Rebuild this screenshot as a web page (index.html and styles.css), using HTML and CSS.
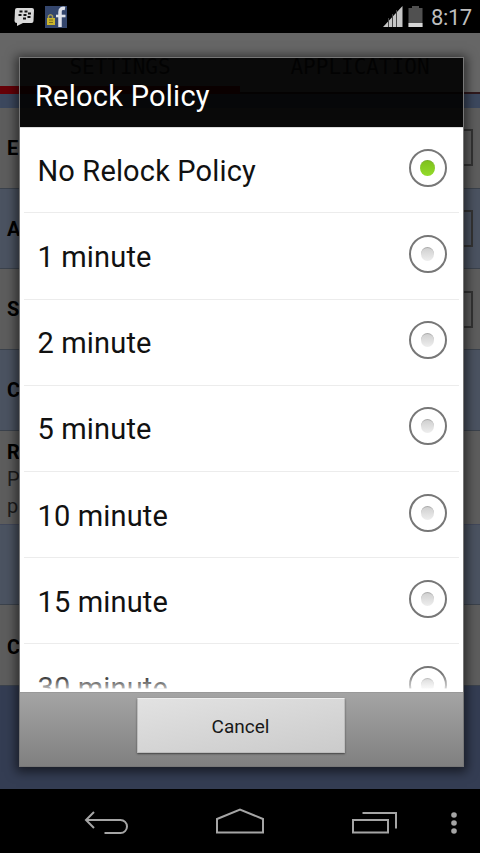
FILE: index.html
```
<!DOCTYPE html>
<html lang="en">
<head>
<meta charset="utf-8">
<title>Relock Policy</title>
<link rel="stylesheet" href="styles.css">
</head>
<body>
<div class="screen">
  <header class="status">
    <svg class="notices" width="70" height="33" viewBox="0 0 70 33">
      <path d="M17 8h15q2 0 2 2l-.5 11q0 2-2 2h-8.500l-6 3v-3q-2.500 0-2.500-2L15 10q0-2 2-2z" fill="#d8d8d8"/>
      <g stroke="#111" stroke-width="2" fill="none"><path d="M19.500 11.500h3M24.500 11.500h3M18.500 15h3M23.500 15h3M28 13.500h3M23 18.500h3M27.500 17h3"/></g>
      <path d="M45 6h22v22H45z" fill="#34466d"/>
      <path d="M60 27V12q0-4.500 5-3.500" fill="none" stroke="#dfe2ea" stroke-width="3.500"/>
      <path d="M56 16h9.500" stroke="#dfe2ea" stroke-width="2.600"/>
      <path d="M48.500 18v-2q2-2.500 4 0v2" fill="none" stroke="#a69b54" stroke-width="1.500"/>
      <path d="M47 18h8v7h-8z" fill="#c9b42c"/><path d="M49 20h4M49 22.500h4" stroke="#7b6d20"/>
    </svg>
    <svg class="signals" width="50" height="33" viewBox="0 0 50 33">
      <path d="M2 27 21.500 6v21z" fill="#c6c6c6"/>
      <path d="M7.500 18v9M11.500 14v13M15.500 10v17" stroke="#444" stroke-width="1"/>
      <path d="M27.500 8H31V6h7v2h3.500v19h-14z" fill="#505050"/><path d="M27.500 23h14v4h-14z" fill="#d6d6d6"/>
    </svg>
    <time class="clock">8:17</time>
  </header>

  <main class="app">
    <div class="tabs"><span class="tab active">SETTINGS</span><span class="tab">APPLICATION</span></div>
    <div class="band"></div>
    <div class="pref"><b>E</b><i class="check"></i></div>
    <div class="pref blue"><b>A</b><i class="check"></i></div>
    <div class="pref"><b>S</b><i class="check"></i></div>
    <div class="pref blue"><b>C</b></div>
    <div class="pref tall"><b>R</b><span>P</span><span>p</span></div>
    <div class="pref blue"></div>
    <div class="pref last"><b>C</b></div>

    <section class="dialog">
      <h1 class="title">Relock Policy</h1>
      <div class="list">
        <div class="option"><span>No Relock Policy</span><i class="radio on"></i></div>
        <div class="option"><span>1 minute</span><i class="radio"></i></div>
        <div class="option"><span>2 minute</span><i class="radio"></i></div>
        <div class="option"><span>5 minute</span><i class="radio"></i></div>
        <div class="option"><span>10 minute</span><i class="radio"></i></div>
        <div class="option"><span>15 minute</span><i class="radio"></i></div>
        <div class="option"><span>30 minute</span><i class="radio"></i></div>
      </div>
      <div class="actions"><button class="cancel">Cancel</button></div>
    </section>
  </main>

  <nav class="nav">
    <svg width="480" height="64" viewBox="0 0 480 64" fill="none" stroke="#a5a5a5" stroke-width="2">
      <path d="M94 23l-8 8 8 8M87 31h33.500a6.500 6.500 0 0 1 0 13H104.500"/>
      <path d="M217 43.500V30l23-9.500L263 30v13.500z"/>
      <path d="M353 31h35v12.500h-35zM362.500 24H396v15.500"/>
      <g fill="#a5a5a5" stroke="none"><circle cx="454" cy="26" r="2.800"/><circle cx="454" cy="34" r="2.800"/><circle cx="454" cy="42" r="2.800"/></g>
    </svg>
  </nav>
</div>
</body>
</html>
```
FILE: styles.css
```
* { box-sizing: border-box; }
body { margin: 0; background: #000; font-family: Roboto, sans-serif; }
.screen { width: 480px; height: 853px; display: flex; flex-direction: column; overflow: hidden; }
.status { height: 33px; background: #000; display: flex; align-items: center; flex: none; }
.signals { margin-left: auto; }
.clock { color: #bebebe; font-size: 22px; line-height: 33px; width: 49px; height: 33px; padding-top: 1px; letter-spacing: -0.4px; }

.app { position: relative; height: 756px; flex: none; background: #343d53; }
.tabs { height: 61px; display: flex; background: #666; }
.tab { flex: 1; padding-top: 24px; text-align: center; font: 21px/20px "DejaVu Sans Mono", monospace; color: #1c1c1c; border-bottom: 2px solid #30191d; }
.tab.active { border-bottom: 8px solid #660008; }
.band { height: 14px; background: #3c485e; }
.pref { height: 80.700px; padding: 0 7px; display: flex; align-items: center; justify-content: space-between; background: #5d5d5d; border-bottom: 1px solid #3b424c; font-size: 20px; color: #000; }
.pref.blue { background: #4b5361; }
.pref.tall { height: 94px; flex-direction: column; align-items: flex-start; justify-content: flex-start; padding-top: 8px; line-height: 27px; border-color: #42485a; }
.pref.tall span { color: #1c1c1c; }
.pref.last { height: 81px; padding-top: 3px; }
.check { width: 36px; height: 37px; border: 2px solid #343434; }

.dialog { position: absolute; left: 19px; top: 24px; width: 445px; height: 710px; border: 1px solid #777; box-shadow: 0 2px 10px 3px rgba(0, 0, 0, .55); display: flex; flex-direction: column; }
.title { margin: 0; height: 69px; flex: none; padding: 3px 0 0 15px; background: rgba(0, 0, 0, .9); color: #fff; font-size: 29px; line-height: 70px; font-weight: 400; letter-spacing: .25px; }
.list { position: relative; height: 565px; flex: none; overflow: hidden; border-top: 1px solid #ddd; background: #fff; }
.list::after { content: ""; position: absolute; left: 0; right: 0; bottom: 0; height: 18px; background: linear-gradient(rgba(255, 255, 255, 0), rgba(255, 255, 255, .7) 80%, #fff 81%); }
.option { height: 86.200px; margin: 0 4px; padding: 0 12.500px 3px 13.500px; display: flex; align-items: center; justify-content: space-between; border-bottom: 1px solid #ececec; font-size: 29px; letter-spacing: .15px; color: #111; }
.option:first-child { height: 85.400px; }
.option span { padding-top: 5px; }
.radio { width: 38px; height: 38px; margin-top: -1px; border: 2px solid #777; border-radius: 50%; display: grid; place-items: center; }
.radio::after { content: ""; width: 13px; height: 13px; border-radius: 50%; background: linear-gradient(#d0d0d0, #eee); border-top: 1px solid #aaa; }
.radio.on::after { width: 15px; height: 15px; background: linear-gradient(#7fc21b, #93db2b); border-top-color: #75ad25; }
.actions { height: 74px; flex: none; padding: 5px 2px 0 0; display: flex; justify-content: center; align-items: flex-start; background: linear-gradient(#a4a4a4, #808080); border-top: 1px solid #999; }
.cancel { width: 208px; height: 55px; padding: 1px 0 0; border: 1px solid #bcbcbc; border-top-color: #eee; border-radius: 1px; background: linear-gradient(170deg, #e2e2e2, #cbcbcb); box-shadow: 0 1px 2px rgba(0, 0, 0, .5); color: #181818; font: 19px Roboto, sans-serif; }
.nav { height: 64px; flex: none; background: #000; }
.nav svg { display: block; }
```
